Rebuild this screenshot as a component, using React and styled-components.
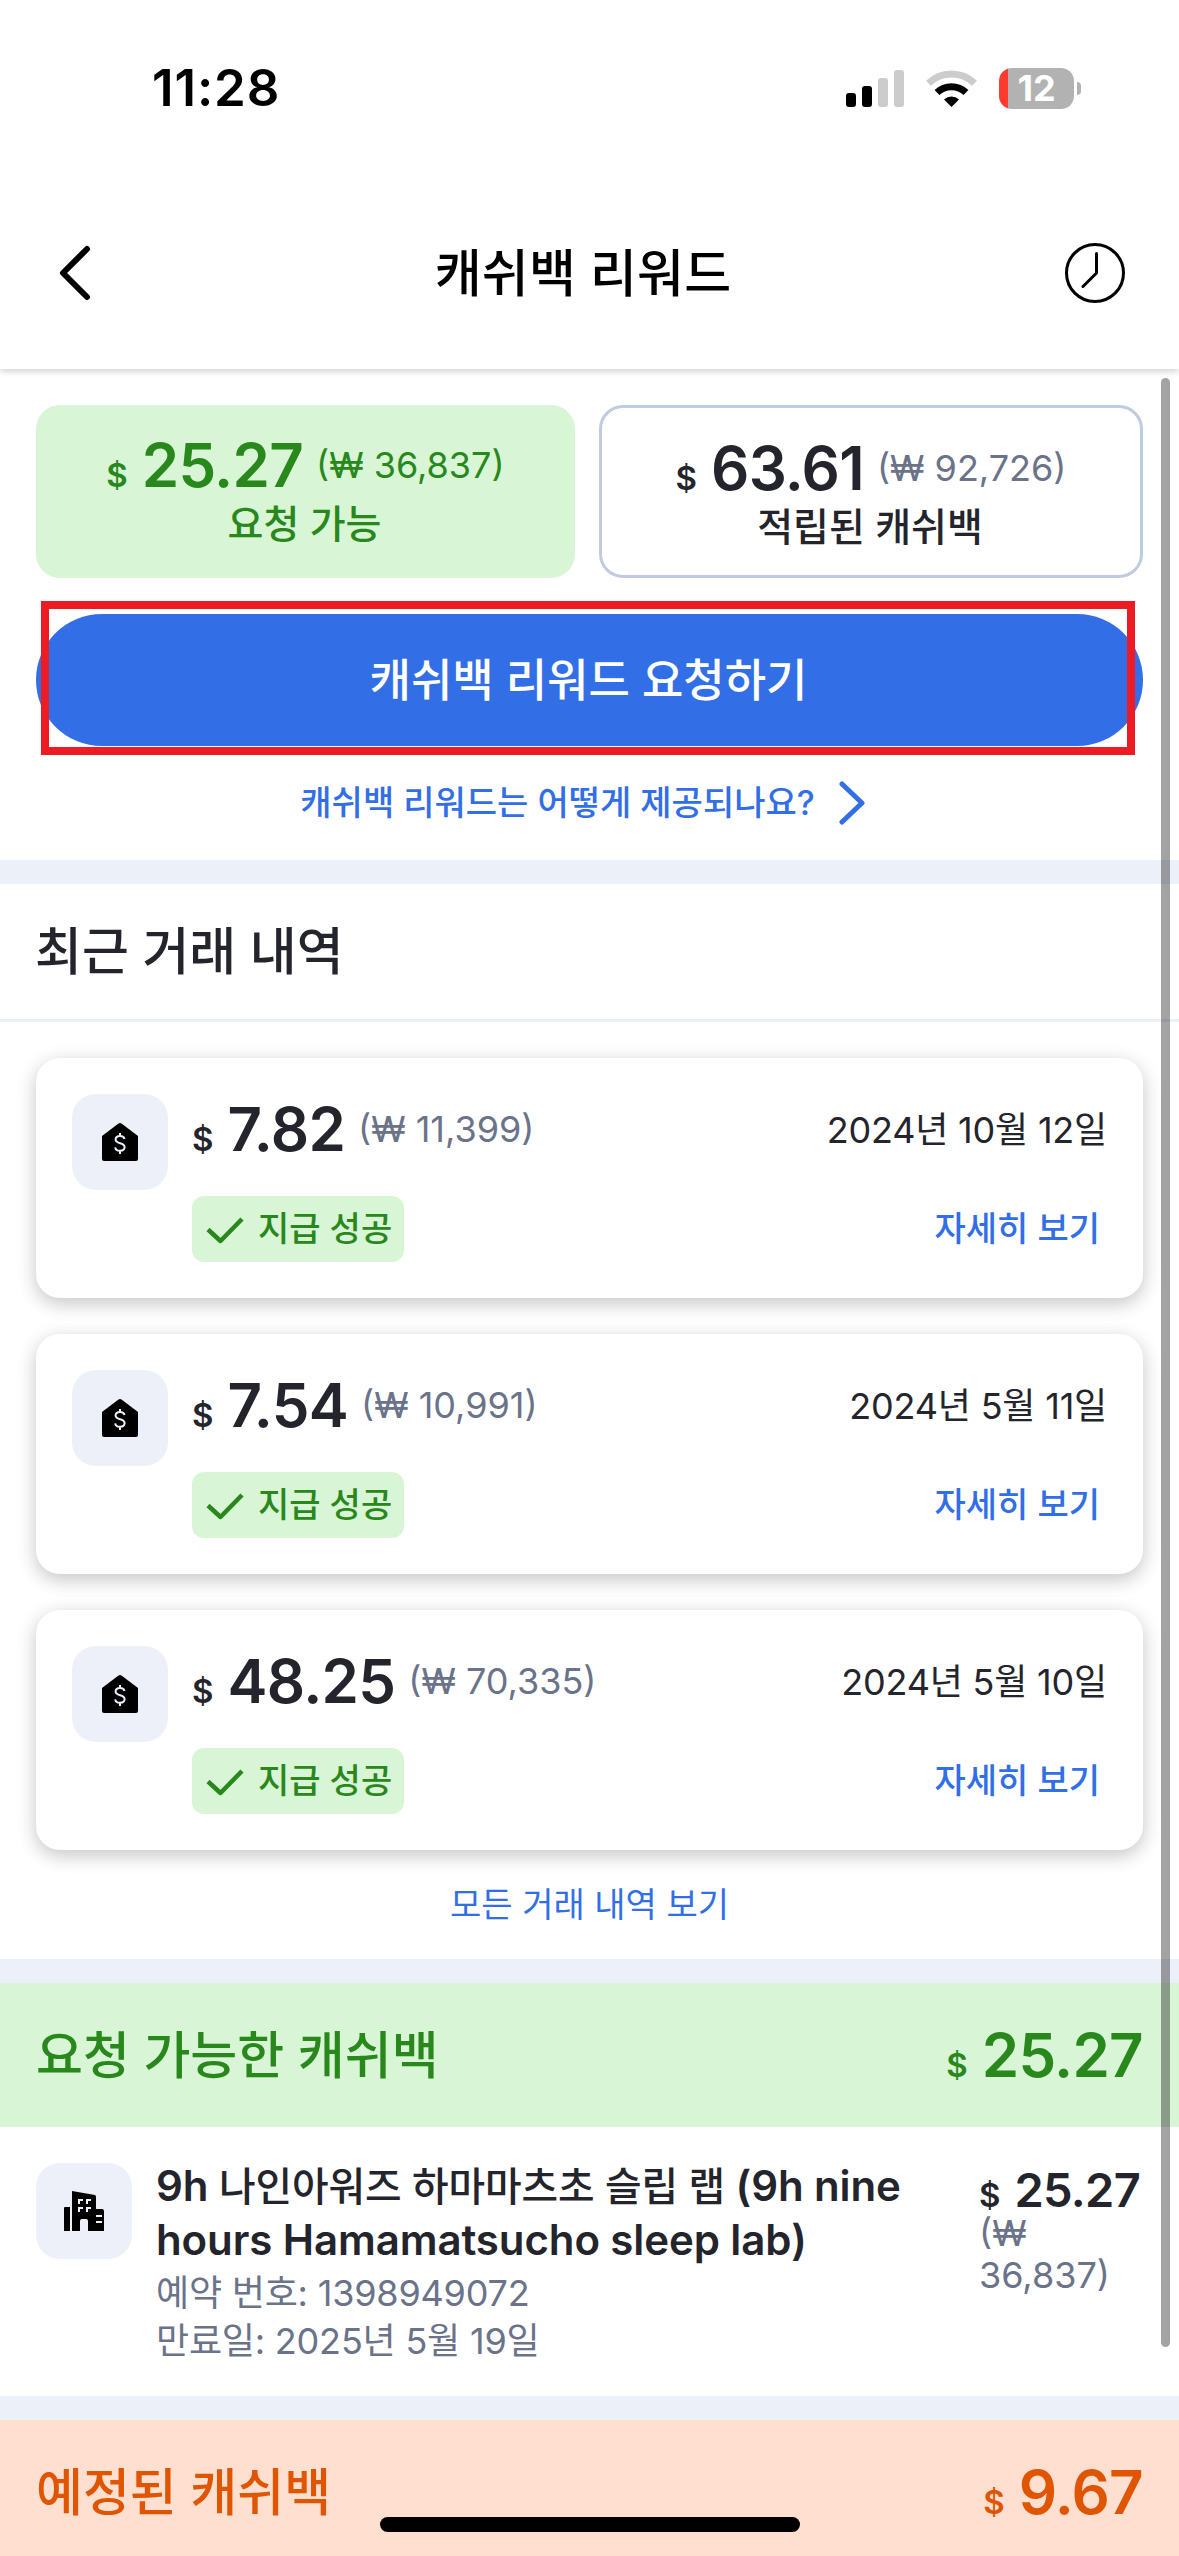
import React from 'react';
import styled, { createGlobalStyle } from 'styled-components';

const GlobalStyle = createGlobalStyle`
  * {
    box-sizing: border-box;
  }

  body {
    margin: 0;
    background: #fff;
    color: #24252c;
    font-family: Inter, 'Noto Sans CJK KR', sans-serif;
    -webkit-font-smoothing: antialiased;
  }
`;

const Screen = styled.div`
  position: relative;
  display: flex;
  flex-direction: column;
  width: 1179px;
  height: 2556px;
  overflow: hidden;
  background: #fff;
`;

const Header = styled.header`
  position: relative;
  z-index: 1;
  flex: none;
  height: 369px;
  background: #fff;
  box-shadow: 0 3px 6px rgba(0, 0, 0, 0.16);
`;

const StatusBar = styled.div`
  display: flex;
  align-items: center;
  justify-content: space-between;
  height: 177px;
  padding: 0 98px 0 152px;
`;

const Clock = styled.span`
  padding-bottom: 2px;
  font-size: 51px;
  font-weight: 600;
  line-height: 60px;
  letter-spacing: 0.9px;
  color: #000;
`;

const StatusIcons = styled.div`
  display: flex;
  align-items: center;
  gap: 22px;
`;

const Battery = styled.div`
  display: flex;
  align-items: center;
  gap: 3px;
`;

const BatteryBody = styled.div`
  display: flex;
  align-items: center;
  justify-content: center;
  width: 75px;
  height: 41px;
  border-radius: 13px;
  background: linear-gradient(90deg, #ff3b30 9px, #b2b2b2 9px);
  color: #fff;
  font-size: 36px;
  font-weight: 700;
  line-height: 41px;
`;

const BatteryCap = styled.div`
  width: 4px;
  height: 13px;
  border-radius: 0 4px 4px 0;
  background: #b2b2b2;
`;

const NavBar = styled.div`
  display: grid;
  grid-template-columns: 60px 1fr 60px;
  align-items: center;
  height: 192px;
  padding: 0 54px 0 45px;
`;

const NavTitle = styled.h1`
  margin: 0;
  padding: 1px 4px 0 0;
  text-align: center;
  font-size: 51px;
  font-weight: 500;
  line-height: 60px;
  letter-spacing: 0.2px;
  color: #000;
`;

const IconButton = styled.button`
  display: flex;
  padding: 0;
  border: none;
  background: none;
`;

const Summary = styled.section`
  flex: none;
  height: 491px;
  padding: 36px 36px 0;
`;

const Balances = styled.div`
  display: grid;
  grid-template-columns: 539px 544px;
  gap: 24px;
  height: 173px;
`;

const Balance = styled.div`
  display: flex;
  flex-direction: column;
  align-items: center;
  padding-top: 30px;
  border: ${props => (props.$ready ? 'none' : '3px solid #c0cae0')};
  border-radius: 24px;
  background: ${props => (props.$ready ? '#d8f5d6' : '#fff')};
  color: ${props => (props.$ready ? '#28881c' : '#24252c')};
`;

const BalanceLabel = styled.span`
  margin-top: -8px;
  padding-right: 2px;
  font-size: 39px;
  font-weight: 500;
  line-height: 54px;
`;

const AmountRow = styled.div`
  display: flex;
  align-items: baseline;
  line-height: ${props => props.$line || 60}px;
  white-space: nowrap;
`;

const Currency = styled.span`
  margin-right: 14px;
  font-size: 33px;
  font-weight: 600;
`;

const Value = styled.span`
  font-size: ${props => props.$size || 60}px;
  font-weight: 600;
  letter-spacing: -0.7px;
`;

const Converted = styled.span`
  position: relative;
  top: -9px;
  margin-left: 13px;
  font-size: 36px;
  color: ${props => (props.$inherit ? 'inherit' : '#6a7389')};
`;

const RequestArea = styled.div`
  position: relative;
  margin-top: 36px;
`;

const RequestButton = styled.button`
  display: block;
  width: 100%;
  height: 132px;
  padding: 0 2px 5px 0;
  border: none;
  border-radius: 66px;
  background: #326fe6;
  color: #fff;
  font-family: inherit;
  font-size: 45px;
  font-weight: 500;
`;

// Red outline drawn over the request button
const Highlight = styled.div`
  position: absolute;
  top: -13px;
  left: 5px;
  right: 8px;
  height: 154px;
  border: 8px solid #ed1c24;
`;

const HelpLink = styled.a`
  display: flex;
  align-items: center;
  justify-content: center;
  gap: 24px;
  height: 114px;
  padding-right: 14px;
  color: #326fe6;
  font-size: 34px;
  font-weight: 500;
`;

const HelpText = styled.span`
  padding-bottom: 5px;
`;

const Separator = styled.div`
  flex: none;
  height: 24px;
  background: #ecf0f9;
`;

const SectionTitle = styled.h2`
  flex: none;
  height: 138px;
  margin: 0;
  padding: 0 35px;
  border-bottom: 3px solid #ecf0f9;
  font-size: 51px;
  font-weight: 500;
  line-height: 136px;
`;

const History = styled.div`
  display: flex;
  flex: none;
  flex-direction: column;
  gap: 36px;
  padding: 36px 36px 0;
`;

const Card = styled.article`
  display: flex;
  gap: 24px;
  height: 240px;
  padding: 36px;
  border-radius: 24px;
  background: #fff;
  box-shadow: 0 6px 18px rgba(0, 0, 0, 0.16), 0 4px 24px rgba(0, 0, 0, 0.08);
`;

const IconTile = styled.div`
  display: flex;
  flex: none;
  align-items: center;
  justify-content: center;
  width: 96px;
  height: 96px;
  border-radius: 24px;
  background: #edf0f9;
`;

const CardBody = styled.div`
  display: flex;
  flex: 1;
  flex-direction: column;
  justify-content: space-between;
`;

const CardLine = styled.div`
  display: flex;
  align-items: center;
  justify-content: space-between;
`;

const CardDate = styled.time`
  padding-bottom: 9px;
  font-size: 36px;
  line-height: 62px;
  letter-spacing: -0.2px;
`;

const PaidBadge = styled.span`
  display: flex;
  align-items: center;
  gap: 13px;
  height: 66px;
  padding: 0 12px 0 13px;
  border-radius: 12px;
  background: #d8f5d6;
  color: #28881c;
  font-size: 34px;
  font-weight: 500;
`;

const BadgeText = styled.span`
  padding-bottom: 5px;
`;

const DetailLink = styled.a`
  padding: 0 7px 5px 0;
  color: #326fe6;
  font-size: 34px;
  font-weight: 500;
`;

const AllLink = styled.a`
  flex: none;
  height: 109px;
  text-align: center;
  color: #326fe6;
  font-size: 34px;
  line-height: 109px;
`;

const Band = styled.div`
  display: flex;
  flex: none;
  align-items: center;
  justify-content: space-between;
  height: 144px;
  padding: 0 36px;
  background: ${props => (props.$pending ? '#ffdfd0' : '#d8f5d6')};
  color: ${props => (props.$pending ? '#e05502' : '#28881c')};
`;

const BandTitle = styled.h2`
  margin: 0;
  padding-bottom: 6px;
  font-size: 51px;
  font-weight: 500;
`;

const BandTotal = styled.div`
  padding-top: 9px;
`;

const Booking = styled.div`
  display: flex;
  flex: none;
  height: 269px;
  padding: 36px 36px 0;
`;

const BookingInfo = styled.div`
  flex: 1;
  padding-left: 24px;
`;

const BookingName = styled.h3`
  margin: -4px 0 2px;
  font-size: 42px;
  font-weight: 600;
  line-height: 54px;
  letter-spacing: -0.1px;
  white-space: nowrap;
`;

const Korean = styled.span`
  font-size: 39.800px;
  font-weight: 500;
  line-height: 1;
`;

const BookingMeta = styled.p`
  margin: 0;
  color: #6a7389;
  font-size: 36px;
  line-height: 48px;
  letter-spacing: -0.2px;
`;

const BookingPrice = styled.div`
  width: 164px;
`;

const BookingConverted = styled.div`
  width: 140px;
  margin-top: -10px;
  color: #6a7389;
  font-size: 36px;
  line-height: 42px;
`;

const ScrollThumb = styled.div`
  position: absolute;
  z-index: 2;
  top: 378px;
  right: 9px;
  width: 9px;
  height: 1969px;
  border-radius: 5px;
  background: rgba(0, 0, 0, 0.36);
`;

const HomeIndicator = styled.div`
  position: absolute;
  bottom: 24px;
  left: 380px;
  width: 420px;
  height: 15px;
  border-radius: 8px;
  background: #000;
`;

const SignalIcon = () => (
  <svg width="58" height="37" viewBox="0 0 58 37">
    <rect x="0" y="23" width="10" height="14" rx="3" />
    <rect x="16" y="16" width="10" height="21" rx="3" />
    <rect x="32" y="8" width="10" height="29" rx="3" fill="#ccc" />
    <rect x="48" y="0" width="10" height="37" rx="3" fill="#ccc" />
  </svg>
);

const WifiIcon = () => (
  <svg width="51" height="37" viewBox="0 0 51 37" fill="none">
    <path d="M2.5 13.3A33 33 0 0 1 48.5 13.3" stroke="#ccc" strokeWidth="7" />
    <path d="M11 22.5A21 21 0 0 1 40 22.5" stroke="#000" strokeWidth="7" />
    <path d="M25.5 37L18 29.5A11 11 0 0 1 33 29.5Z" fill="#000" />
  </svg>
);

const BackIcon = () => (
  <svg width="60" height="60" viewBox="0 0 60 60" fill="none">
    <path d="M42 6L18 30L42 54" stroke="#000" strokeWidth="6" strokeLinecap="round" strokeLinejoin="round" />
  </svg>
);

const HistoryIcon = () => (
  <svg width="60" height="60" viewBox="0 0 60 60" fill="none" stroke="#000" strokeWidth="3">
    <circle cx="30" cy="30" r="28.5" />
    <path d="M31.5 10.5V30L18 43.5" strokeLinecap="round" strokeLinejoin="round" />
  </svg>
);

const ChevronIcon = () => (
  <svg width="26" height="44" viewBox="0 0 26 44" fill="none">
    <path d="M3 3L23 22L3 41" stroke="#326fe6" strokeWidth="5" strokeLinecap="round" strokeLinejoin="round" />
  </svg>
);

const CheckIcon = () => (
  <svg width="40" height="30" viewBox="0 0 40 30" fill="none">
    <path d="M3 15.5L15.5 27L37 5" stroke="#28881c" strokeWidth="4.5" strokeLinejoin="round" />
  </svg>
);

const CashHouseIcon = () => (
  <svg width="36" height="38" viewBox="0 0 36 38" fill="none">
    <path d="M0 13L16.5 0.6Q18 -0.5 19.5 0.6L36 13V36Q36 38 34 38H2Q0 38 0 36Z" fill="#000" />
    <path d="M22.5 16C22 13.8 20.3 13 18 13C15.5 13 13.6 14.2 13.6 16.5C13.6 21.6 22.6 18.8 22.6 24C22.6 26.5 20.5 27.8 18 27.8C15.6 27.8 13.6 26.8 13.2 24.3M18 10V13M18 28V31" stroke="#edf0f9" strokeWidth="2" />
  </svg>
);

const HotelIcon = () => (
  <svg width="40" height="40" viewBox="0 0 40 40">
    <path d="M0 17Q0 16 1 16H6V40H0ZM8 0L31 4Q32 4.5 32 6V18H38Q40 18 40 20V40H24V30Q24 28 22 28H18Q16 28 16 30V40H8Z" />
    <path d="M14 8h5v2h-3v3h-2zM22 8h5v2h-3v3h-2zM14 16h5v2h-3v3h-2zM22 16h5v2h-3v3h-2zM32 24h6v2h-6zM32 30h6v2h-6z" fill="#edf0f9" />
  </svg>
);

const payouts = [
  { amount: '7.82', won: '11,399', date: '2024년 10월 12일' },
  { amount: '7.54', won: '10,991', date: '2024년 5월 11일' },
  { amount: '48.25', won: '70,335', date: '2024년 5월 10일' },
];

function Amount({ value, won, size, line, inherit }) {
  return (
    <AmountRow $line={line}>
      <Currency>$</Currency>
      <Value $size={size}>{value}</Value>
      {won && <Converted $inherit={inherit}>(₩ {won})</Converted>}
    </AmountRow>
  );
}

function Payout({ amount, won, date }) {
  return (
    <Card>
      <IconTile>
        <CashHouseIcon />
      </IconTile>
      <CardBody>
        <CardLine>
          <Amount value={amount} won={won} line={70} />
          <CardDate>{date}</CardDate>
        </CardLine>
        <CardLine>
          <PaidBadge>
            <CheckIcon />
            <BadgeText>지급 성공</BadgeText>
          </PaidBadge>
          <DetailLink>자세히 보기</DetailLink>
        </CardLine>
      </CardBody>
    </Card>
  );
}

function App() {
  return (
    <>
      <GlobalStyle />
      <Screen>
        <Header>
          <StatusBar>
            <Clock>11:28</Clock>
            <StatusIcons>
              <SignalIcon />
              <WifiIcon />
              <Battery>
                <BatteryBody>12</BatteryBody>
                <BatteryCap />
              </Battery>
            </StatusIcons>
          </StatusBar>
          <NavBar>
            <IconButton aria-label="뒤로">
              <BackIcon />
            </IconButton>
            <NavTitle>캐쉬백 리워드</NavTitle>
            <IconButton aria-label="내역">
              <HistoryIcon />
            </IconButton>
          </NavBar>
        </Header>

        <Summary>
          <Balances>
            <Balance $ready>
              <Amount value="25.27" won="36,837" inherit />
              <BalanceLabel>요청 가능</BalanceLabel>
            </Balance>
            <Balance>
              <Amount value="63.61" won="92,726" />
              <BalanceLabel>적립된 캐쉬백</BalanceLabel>
            </Balance>
          </Balances>
          <RequestArea>
            <RequestButton>캐쉬백 리워드 요청하기</RequestButton>
            <Highlight />
          </RequestArea>
          <HelpLink>
            <HelpText>캐쉬백 리워드는 어떻게 제공되나요?</HelpText>
            <ChevronIcon />
          </HelpLink>
        </Summary>

        <Separator />
        <SectionTitle>최근 거래 내역</SectionTitle>
        <History>
          {payouts.map((payout) => (
            <Payout key={payout.date} {...payout} />
          ))}
        </History>
        <AllLink>모든 거래 내역 보기</AllLink>

        <Separator />
        <Band>
          <BandTitle>요청 가능한 캐쉬백</BandTitle>
          <BandTotal>
            <Amount value="25.27" />
          </BandTotal>
        </Band>
        <Booking>
          <IconTile>
            <HotelIcon />
          </IconTile>
          <BookingInfo>
            <BookingName>
              9h <Korean>나인아워즈 하마마츠초 슬립 랩</Korean> (9h nine
              <br />
              hours Hamamatsucho sleep lab)
            </BookingName>
            <BookingMeta>예약 번호: 1398949072</BookingMeta>
            <BookingMeta>만료일: 2025년 5월 19일</BookingMeta>
          </BookingInfo>
          <BookingPrice>
            <Amount value="25.27" size={47} line={54} />
            <BookingConverted>(₩ 36,837)</BookingConverted>
          </BookingPrice>
        </Booking>

        <Separator />
        <Band $pending>
          <BandTitle>예정된 캐쉬백</BandTitle>
          <BandTotal>
            <Amount value="9.67" />
          </BandTotal>
        </Band>

        <ScrollThumb />
        <HomeIndicator />
      </Screen>
    </>
  );
}

export default App;
